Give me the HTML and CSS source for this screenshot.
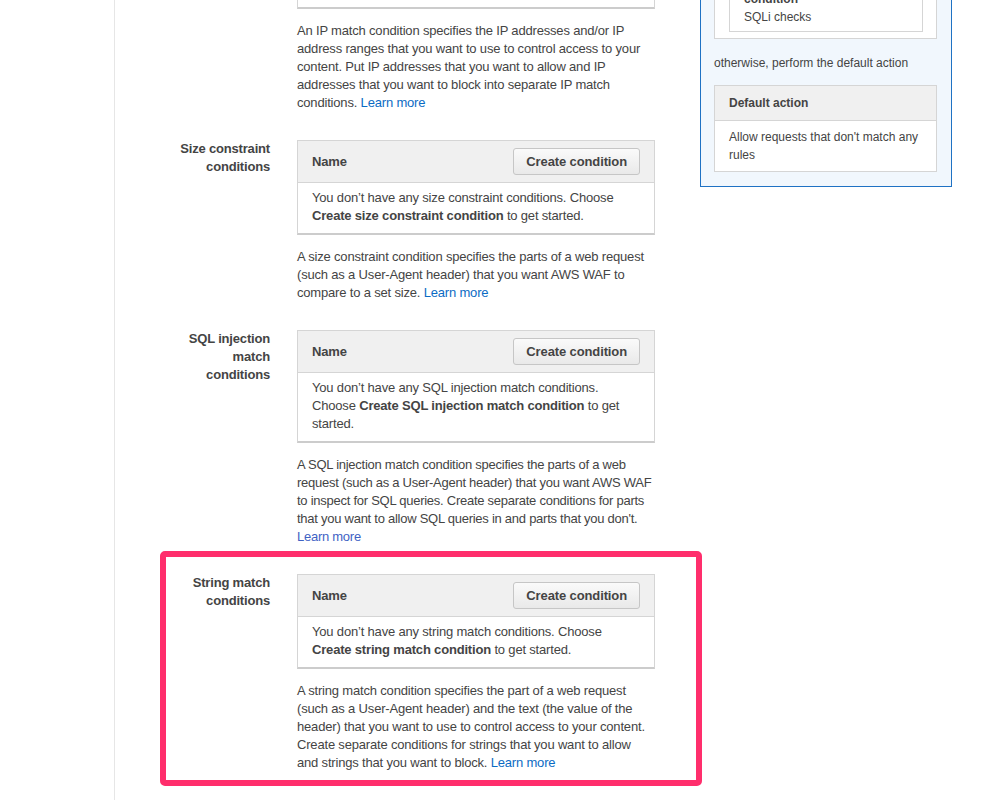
FILE: index.html
```html
<!DOCTYPE html>
<html lang="en">
<head>
  <meta charset="UTF-8" />
  <meta name="viewport" content="width=device-width, initial-scale=1.0">
  <title>Conditions – AWS WAF</title>
  <link rel="stylesheet" href="styles.css">
</head>
<body>

  <div class="page">

    <!-- Conditions column -->
    <div class="main">

      <!-- IP match (scrolled, only the tail is visible) -->
      <div class="section">
        <div class="label"></div>
        <div>
          <div class="cond-table cond-tail"></div>
          <p class="desc">
            An IP match condition specifies the IP addresses and/or IP address ranges that you want to use to control access to your content. Put IP addresses that you want to allow and IP addresses that you want to block into separate IP match conditions.
            <a href="#">Learn more</a>
          </p>
        </div>
      </div>

      <!-- Size constraint -->
      <div class="section">
        <div class="label">Size constraint conditions</div>
        <div>
          <div class="cond-table">
            <div class="cond-head">
              <span>Name</span>
              <button class="btn">Create condition</button>
            </div>
            <div class="cond-body">
              You don’t have any size constraint conditions. Choose <b>Create size constraint condition</b> to get started.
            </div>
          </div>
          <p class="desc">
            A size constraint condition specifies the parts of a web request (such as a User-Agent header) that you want AWS WAF to compare to a set size.
            <a href="#">Learn more</a>
          </p>
        </div>
      </div>

      <!-- SQL injection -->
      <div class="section">
        <div class="label">SQL injection match conditions</div>
        <div>
          <div class="cond-table">
            <div class="cond-head">
              <span>Name</span>
              <button class="btn">Create condition</button>
            </div>
            <div class="cond-body">
              You don’t have any SQL injection match conditions. Choose <b>Create SQL injection match condition</b> to get started.
            </div>
          </div>
          <p class="desc tight">
            A SQL injection match condition specifies the parts of a web request (such as a User-Agent header) that you want AWS WAF to inspect for SQL queries. Create separate conditions for parts that you want to allow SQL queries in and parts that you don't.
            <a href="#" class="visited">Learn more</a>
          </p>
        </div>
      </div>

      <!-- String match (highlighted) -->
      <div class="section highlight">
        <div class="label">String match conditions</div>
        <div>
          <div class="cond-table">
            <div class="cond-head">
              <span>Name</span>
              <button class="btn">Create condition</button>
            </div>
            <div class="cond-body">
              You don’t have any string match conditions. Choose <b>Create string match condition</b> to get started.
            </div>
          </div>
          <p class="desc">
            A string match condition specifies the part of a web request (such as a User-Agent header) and the text (the value of the header) that you want to use to control access to your content. Create separate conditions for strings that you want to allow and strings that you want to block.
            <a href="#">Learn more</a>
          </p>
        </div>
      </div>

    </div>

    <!-- Web ACL summary -->
    <div class="panel">
      <div class="box rule-box">
        <div class="rule-inner">
          <div class="rule-cut"><b>condition</b></div>
          <div>SQLi checks</div>
        </div>
      </div>

      <p class="otherwise">otherwise, perform the default action</p>

      <div class="box">
        <div class="box-head">Default action</div>
        <div class="box-body">Allow requests that don't match any rules</div>
      </div>
    </div>

  </div>

</body>
</html>
```

FILE: styles.css
```css
:root {
  --text: #444444;
  --link: #0b6bc4;
  --border: #d5d5d5;
  --head-bg: #f0f0f0;
  --accent: #1f72c4;
  --highlight: #ff2e6c;
}

* {
  box-sizing: border-box;
  margin: 0;
  padding: 0;
}

body {
  font-family: "Liberation Sans", Arial, sans-serif;
  font-size: 13px;
  line-height: 18px;
  letter-spacing: -0.18px;
  color: var(--text);
  background: #ffffff;
}

a {
  color: var(--link);
  text-decoration: none;
}

a.visited {
  color: #3f62c4;
}

.page {
  display: flex;
  align-items: flex-start;
  padding-left: 114px;
}

.main {
  width: 586px;
  min-height: 100vh;
  border-left: 1px solid #e6e6e6;
}

/* Condition sections */
.section {
  display: grid;
  grid-template-columns: 155px 358px;
  column-gap: 27px;
  width: 540px;
  margin-bottom: 28px;
}

.label {
  padding-left: 55px;
  font-weight: bold;
  text-align: right;
}

.cond-table {
  border: 1px solid var(--border);
  border-bottom: 2px solid #cccccc;
}

.cond-tail {
  height: 9px;
  border-top: none;
}

.cond-head {
  display: flex;
  justify-content: space-between;
  align-items: center;
  background: var(--head-bg);
  padding: 7px 14px;
  font-weight: bold;
  border-bottom: 1px solid var(--border);
}

.cond-body {
  padding: 6px 14px 8px;
}

.btn {
  height: 27px;
  padding: 0 12px;
  font-family: inherit;
  font-size: 13px;
  font-weight: bold;
  letter-spacing: -0.12px;
  color: var(--text);
  background: linear-gradient(#fafafa, #e9e9e9);
  border: 1px solid #c6c6c6;
  border-radius: 3px;
  cursor: pointer;
}

.desc {
  margin-top: 13px;
}

.desc.tight {
  letter-spacing: -0.26px;
}

/* Annotation frame around the string match section */
.highlight {
  position: relative;
}

.highlight::after {
  content: "";
  position: absolute;
  left: 45px;
  right: -47px;
  top: -23px;
  bottom: -14px;
  border: 6px solid var(--highlight);
  border-radius: 5px;
  pointer-events: none;
}

/* Right summary panel */
.panel {
  width: 252px;
  font-size: 12px;
  letter-spacing: 0;
  background: #f1f7fd;
  border: 1px solid var(--accent);
  border-top: none;
  padding: 0 14px 14px 13px;
}

.box {
  background: #ffffff;
  border: 1px solid var(--border);
}

.rule-box {
  border-top: none;
  padding: 0 13px 6px 14px;
}

.rule-inner {
  border: 1px solid var(--border);
  border-top: none;
  padding: 0 14px 5px;
  margin-top: -10px;
}

.otherwise {
  margin: 15px 0 13px;
}

.box-head {
  background: var(--head-bg);
  padding: 8px 14px;
  font-weight: bold;
  border-bottom: 1px solid var(--border);
}

.box-body {
  padding: 7px 14px 7px;
}
```
